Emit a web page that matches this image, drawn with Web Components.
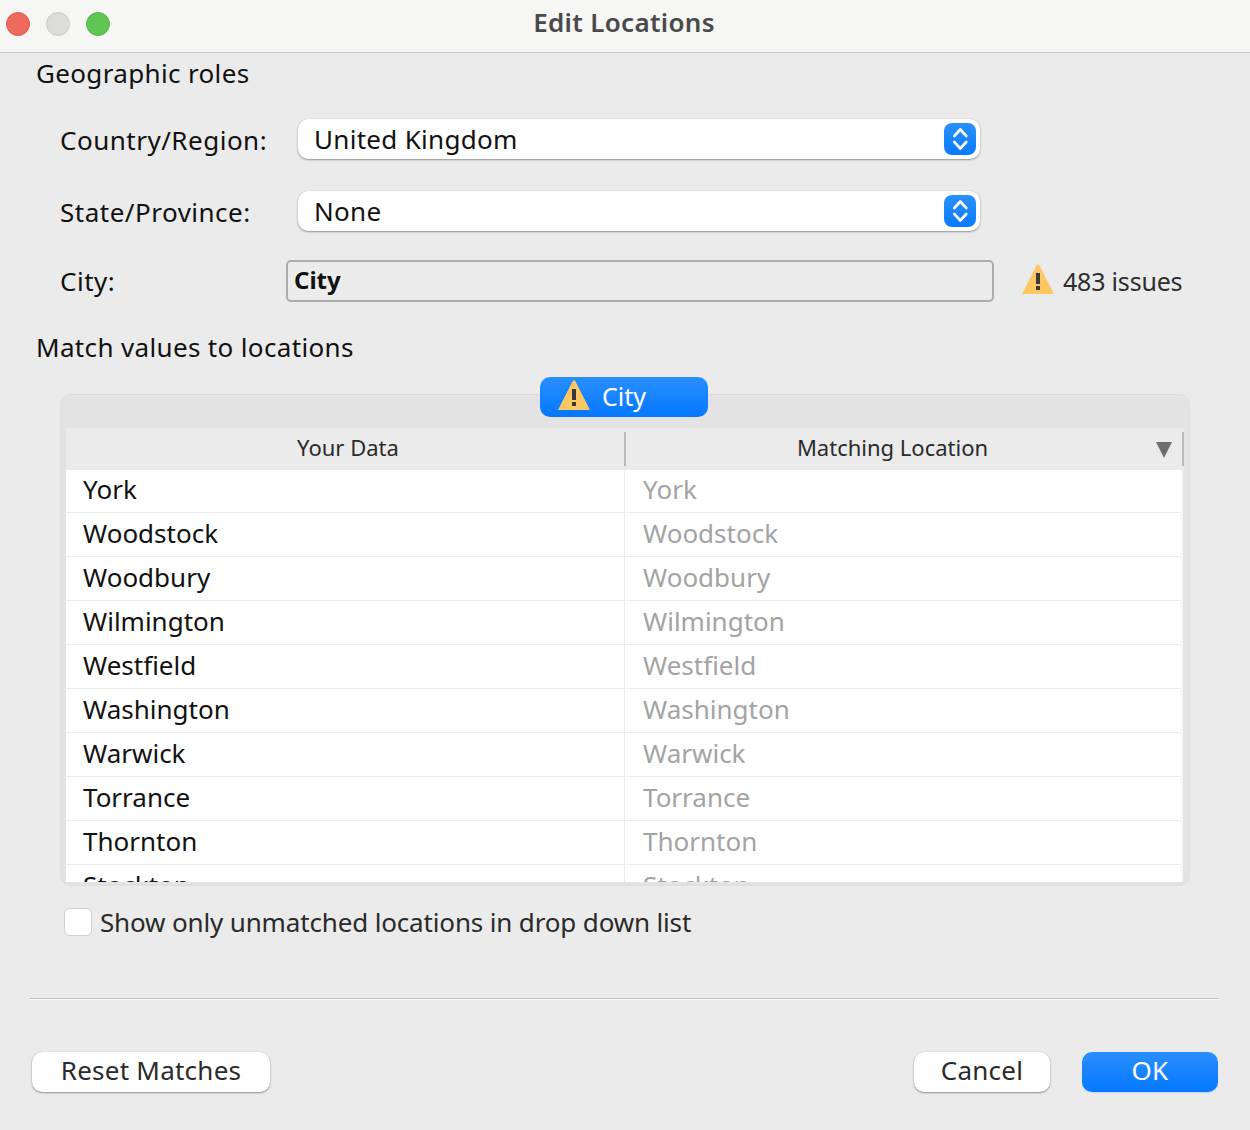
<!DOCTYPE html>
<html><head><meta charset="utf-8">
<style>
html,body{margin:0;padding:0;background:#ebebeb}
body{font-family:"Noto Sans","Open Sans",sans-serif;color:#111}
</style></head><body>
<edit-dialog></edit-dialog>
<script>
const FONT='"Noto Sans","Open Sans",sans-serif';
const WARN=`<svg width="32" height="30" viewBox="0 0 32 30" style="display:block;margin-bottom:4px"><path d="M15 .5 H17 L32 30 H0 Z" fill="#fcc864"/><rect x="14" y="9" width="4" height="11" fill="#3a3a3a"/><rect x="14" y="22" width="4" height="4" fill="#3a3a3a"/></svg>`;
class TitleBar extends HTMLElement{constructor(){super();this.attachShadow({mode:'open'}).innerHTML=`<style>
:host{display:flex;align-items:center;height:52px;background:#f6f6f4;border-bottom:1px solid #cfcfcf;box-sizing:content-box;position:relative;font-family:${FONT}}
.lights{display:flex;gap:16px;padding:0 0 4px 6px}
.l{width:24px;height:24px;border-radius:50%;box-sizing:border-box}
.r{background:#ee6a5f;border:1px solid #e0574c}.g{background:#dcdcda;border:1px solid #c8c8c6}.v{background:#61c554;border:1px solid #53b747}
.t{position:absolute;left:0;right:2px;top:0;height:44px;display:flex;align-items:center;justify-content:center;font-weight:600;font-size:26px;letter-spacing:.3px;color:#4a4a4a}
</style><div class="lights"><div class="l r"></div><div class="l g"></div><div class="l v"></div></div><div class="t"><slot></slot></div>`}}
customElements.define('title-bar',TitleBar);
class SectionHead extends HTMLElement{constructor(){super();this.attachShadow({mode:'open'}).innerHTML=`<style>:host{display:block;font-size:26px;line-height:36px;color:#111;padding-left:36px;letter-spacing:.35px}</style><slot></slot>`}}
customElements.define('section-head',SectionHead);
class PopSelect extends HTMLElement{constructor(){super();this.attachShadow({mode:'open'}).innerHTML=`<style>
:host{display:flex;align-items:center;align-self:flex-start;width:682px;height:40px;box-sizing:border-box;background:#fff;border-radius:10px;box-shadow:0 1px 2px rgba(0,0,0,.38),0 0 1px rgba(0,0,0,.15);padding:0 4px 0 16px;font-size:26px;letter-spacing:.3px;color:#111}
.v{flex:1}
.s{width:32px;height:32px;border-radius:8px;background:linear-gradient(#2b90ff,#087aff);display:flex}
</style><div class="v"><slot></slot></div><div class="s"><svg width="32" height="32" viewBox="0 0 32 32" fill="none" stroke="#fff" stroke-width="2.6" stroke-linecap="round" stroke-linejoin="round"><path d="M10.3 13 L16.3 6.5 L22.3 13"/><path d="M10.3 19 L16.3 25.5 L22.3 19"/></svg></div>`}}
customElements.define('pop-select',PopSelect);
class RoleRow extends HTMLElement{constructor(){super();this.attachShadow({mode:'open'}).innerHTML=`<style>
:host{display:flex;align-items:center;padding-left:60px;font-size:26px;letter-spacing:.5px;color:#111}
.lab{width:var(--lab,238px);flex:none}
</style><div class="lab" part="lab"><slot name="label"></slot></div><slot></slot>`}}
customElements.define('role-row',RoleRow);
class FieldPill extends HTMLElement{constructor(){super();this.attachShadow({mode:'open'}).innerHTML=`<style>
:host{display:flex;align-items:center;width:708px;height:42px;box-sizing:border-box;border:2px solid #acacac;border-radius:5px;padding:0 6px 3px;font-weight:700;font-size:24px;letter-spacing:0;color:#111;background:#ececec}
</style><slot></slot>`}}
customElements.define('field-pill',FieldPill);
class IssueNote extends HTMLElement{constructor(){super();this.attachShadow({mode:'open'}).innerHTML=`<style>
:host{display:flex;align-items:center;gap:9px;margin-left:28px;font-size:25px;color:#2e2e2e;letter-spacing:-.2px}
</style>${WARN}<slot></slot>`}}
customElements.define('issue-note',IssueNote);
class ColTab extends HTMLElement{constructor(){super();this.attachShadow({mode:'open'}).innerHTML=`<style>
:host{display:flex;align-items:center;position:relative;z-index:2;width:168px;height:40px;box-sizing:border-box;border-radius:10px;background:linear-gradient(#2a8fff,#0478ff);color:#fff;padding-left:18px;gap:12px;font-size:25px}
.t{padding-bottom:2px}
</style>${WARN}<div class="t"><slot></slot></div>`}}
customElements.define('col-tab',ColTab);
class DataRow extends HTMLElement{constructor(){super();this.attachShadow({mode:'open'}).innerHTML=`<style>
:host{display:grid;grid-template-columns:559px 1fr;height:44px;flex:none;box-sizing:border-box;border-bottom:1px solid #ececec;font-size:26px;letter-spacing:0;line-height:41px;color:#111}
.a{padding-left:17px;border-right:1px solid #ececec}
.b{padding-left:18px;color:#a3a3a5}
</style><div class="a"><slot name="a"></slot></div><div class="b"><slot name="b"></slot></div>`}}
customElements.define('data-row',DataRow);
class MatchTable extends HTMLElement{constructor(){super();this.attachShadow({mode:'open'}).innerHTML=`<style>
:host{display:block;font-family:${FONT}}
.wrap{display:flex;flex-direction:column;align-items:center;padding:0 60px}
.tabholder{margin-bottom:-23px;margin-right:2px}
.panel{width:1130px;height:492px;box-sizing:border-box;background:#e3e3e3;border:2px solid #e0e0e0;border-top:1px solid #dcdcdc;border-radius:10px;padding:33px 4px 2px 4px;display:flex;flex-direction:column;overflow:hidden}
.hd{height:42px;flex:none;display:grid;grid-template-columns:560px 1fr;background:#ebebeb;font-size:22px;letter-spacing:0;color:#2a2a2a;align-items:center;text-align:center}
.h1{height:34px;display:flex;align-items:center;justify-content:center;border-right:2px solid #b9b9b9;padding:0 0 4px 6px;box-sizing:border-box}
.h2{height:34px;display:flex;align-items:center;justify-content:center;border-right:2px solid #b9b9b9;padding:0 23px 4px 0;box-sizing:border-box;position:relative}
.arrow{position:absolute;right:10px;top:10px;width:0;height:0;border-left:8px solid transparent;border-right:8px solid transparent;border-top:16px solid #6d6d6d}
.rows{flex:1;overflow:hidden;background:#fff;margin-right:1px;border-right:2px solid #f6f6f6}
.list{margin-top:-1px;display:flex;flex-direction:column}
</style><div class="wrap"><div class="tabholder"><slot name="tab"></slot></div><div class="panel"><div class="hd"><div class="h1">Your Data</div><div class="h2">Matching Location<span class="arrow"></span></div></div><div class="rows"><div class="list"><slot></slot></div></div></div></div>`}}
customElements.define('match-table',MatchTable);
class MacCheck extends HTMLElement{constructor(){super();this.attachShadow({mode:'open'}).innerHTML=`<style>
:host{display:flex;align-items:center;gap:8px;padding-left:64px;font-size:26px;letter-spacing:-.15px;color:#2a2a2a}
.b{width:28px;height:28px;box-sizing:border-box;background:#fff;border:1px solid #cfcfcf;border-radius:6px}
</style><div class="b"></div><slot></slot>`}}
customElements.define('mac-check',MacCheck);
class MacButton extends HTMLElement{constructor(){super();this.attachShadow({mode:'open'}).innerHTML=`<style>
:host{display:flex;align-items:center;justify-content:center;height:40px;box-sizing:border-box;padding-bottom:5px;border-radius:10px;background:#fff;color:#2a2a2a;font-size:26px;letter-spacing:.25px;box-shadow:0 1px 2px rgba(0,0,0,.38),0 0 1px rgba(0,0,0,.18)}
:host([primary]){background:linear-gradient(#2a8fff,#0478ff);color:#fff;box-shadow:0 1px 1px rgba(0,90,220,.18)}
</style><slot></slot>`}}
customElements.define('mac-button',MacButton);
class EditDialog extends HTMLElement{constructor(){super();
const names=['York','Woodstock','Woodbury','Wilmington','Westfield','Washington','Warwick','Torrance','Thornton','Stockton'];
this.attachShadow({mode:'open'}).innerHTML=`<style>
:host{display:flex;flex-direction:column;width:1250px;height:1130px;background:#ebebeb;font-family:${FONT};overflow:hidden}
.h1{margin-top:2px}
.r1{margin-top:28px;height:41px}.r2{margin-top:31px;height:41px}
.r3{margin-top:28px;height:42px;--lab:226px}
.h2{margin-top:27px}
.mt{margin-top:12px}
.chk{margin-top:18px}
.sep{margin:58px 31px 0 30px;background:#bfbfbf;border-bottom:1px solid #fbfbfb;flex:none;box-sizing:content-box;height:1px}
.foot{margin-top:52px;display:flex;padding:0 32px;gap:32px}
.sp{flex:1}
</style>
<title-bar>Edit Locations</title-bar>
<section-head class="h1">Geographic roles</section-head>
<role-row class="r1"><span slot="label">Country/Region:</span><pop-select>United Kingdom</pop-select></role-row>
<role-row class="r2"><span slot="label">State/Province:</span><pop-select>None</pop-select></role-row>
<role-row class="r3"><span slot="label">City:</span><field-pill>City</field-pill><issue-note>483 issues</issue-note></role-row>
<section-head class="h2">Match values to locations</section-head>
<match-table class="mt"><col-tab slot="tab">City</col-tab>${names.map(n=>`<data-row><span slot="a">${n}</span><span slot="b">${n}</span></data-row>`).join('')}</match-table>
<mac-check class="chk">Show only unmatched locations in drop down list</mac-check>
<div class="sep"></div>
<div class="foot"><mac-button style="width:238px">Reset Matches</mac-button><div class="sp"></div><mac-button style="width:136px">Cancel</mac-button><mac-button primary style="width:136px">OK</mac-button></div>`}}
customElements.define('edit-dialog',EditDialog);
</script>
</body></html>
